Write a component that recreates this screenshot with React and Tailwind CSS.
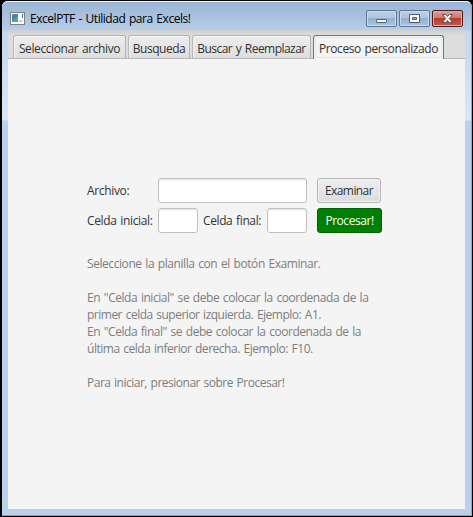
const FONT = "font-['Open_Sans','Noto_Sans',sans-serif]";

function Tab({ label, width, tracking, active }) {
  return (
    <div
      className={`flex shrink-0 justify-center rounded-t-[3px] border border-b-0 pt-[5px] ${width} ${
        active
          ? "h-6 border-[#0f9ac8] bg-[#f4f4f4] shadow-[inset_0_0_0_1px_#f4f4f4,inset_0_0_0_2px_#d8edf5]"
          : "h-[23px] border-[#b5b5b5] bg-linear-to-b from-[#ededed] to-[#dedede] shadow-[inset_0_1px_0_#fafafa,inset_1px_0_0_#f3f3f3]"
      }`}
    >
      <span className={`leading-4 whitespace-nowrap ${tracking}`}>{label}</span>
    </div>
  );
}

function Field({ width }) {
  return (
    <input
      aria-label="campo"
      className={`h-[25px] shrink-0 rounded-[3px] border border-[#c0c0c0] bg-white shadow-[inset_0_2px_2px_-1px_#dedede] outline-none ${width}`}
    />
  );
}

function Caption({ close, children }) {
  return (
    <div
      className={`flex h-[17px] w-[31px] items-center justify-center rounded-[2px] border ${
        close
          ? "border-[#4d1a22] bg-[linear-gradient(#dfa195_0%,#cf7768_46%,#b93a27_50%,#c95b47_100%)] shadow-[inset_0_0_0_1px_#e5aaa0]"
          : "border-[#5d7493] bg-[linear-gradient(#bdd0e6_0%,#aec5df_46%,#94afcf_50%,#aac6e2_100%)] shadow-[inset_0_0_0_1px_#c8daee]"
      }`}
    >
      <svg width="13" height="11" viewBox="0 0 13 11">
        {children}
      </svg>
    </div>
  );
}

export default function App() {
  return (
    <div className={`h-[517px] w-[473px] overflow-hidden bg-black text-xs text-[#333] [word-spacing:1px] ${FONT}`}>
      <div className="h-[517px] rounded-t-[7px] border-t border-r border-b border-l-2 border-black bg-[#b9d1ea]">
        <div className="flex h-full flex-col rounded-t-[6px] border-t border-r border-b border-t-[#eef5fb] border-r-[#36cfe8] border-b-[#22cbe4] bg-[linear-gradient(#9ab4d4_0px,#b7cee8_28px,#c4d7ed_30px,#dae6f4_118px,#b9d1ea_119px)] pr-1.5 pb-1.5 pl-1.5">
          <header className="flex h-7 shrink-0 items-center text-black">
            <svg className="mt-[4px] ml-[1.5px] shrink-0" width="15" height="13" viewBox="0 0 15 13">
              <rect x=".5" y=".5" width="14" height="12" fill="#fff" stroke="#808080" />
              <rect x="2" y="2" width="6" height="8" fill="#4d9b92" />
              <path d="M2 2h6v3L2 8z" fill="#4b83a9" />
              <path d="M8 3v7H3z" fill="#4fae7f" />
              <rect x="9" y="8" width="3" height="2" fill="#ccc" />
              <rect x="12" y="2" width="1" height="4" fill="#287ba5" />
              <rect x="12" y="8" width="1" height="2" fill="#ddd" />
            </svg>
            <h1 className="mt-[6px] ml-[5.5px] leading-4 tracking-[-0.46px] whitespace-nowrap">
              ExcelPTF - Utilidad para Excels!
            </h1>
            <div className="mt-[5px] mr-[2px] ml-auto flex gap-[2px]">
              <Caption>
                <rect x="1.5" y="6.5" width="10" height="3" rx=".5" fill="#fff" stroke="#53606f" />
              </Caption>
              <Caption>
                <path
                  d="M1.5 1.5h10v8h-10zM4.5 4.5h4v2h-4z"
                  fill="#fff"
                  fillRule="evenodd"
                  stroke="#535b70"
                />
              </Caption>
              <Caption close>
                <path
                  d="M1.5 1.5h3.2l1.8 2 1.8-2h3.2L8.3 5.5l3.2 4H8.3l-1.8-2-1.8 2H1.5l3.2-4z"
                  fill="#fff"
                  stroke="#535666"
                />
              </Caption>
            </div>
          </header>
          <main className="flex grow flex-col bg-[#f4f4f4]">
            <nav className="flex h-[29px] shrink-0 items-end gap-[2px] bg-linear-to-b from-[#cfcfcf] to-[#dddddd] to-20% pl-[5px] shadow-[inset_0_-1px_0_#b8b8b8]">
              <div className="mb-px flex h-[23px] items-start gap-[2px]">
                <Tab label="Seleccionar archivo" width="w-[113px]" tracking="tracking-[-0.4px]" />
                <Tab label="Busqueda" width="w-[62px]" tracking="tracking-[-0.5px]" />
                <Tab label="Buscar y Reemplazar" width="w-[119px]" tracking="tracking-[-0.54px]" />
              </div>
              <Tab active label="Proceso personalizado" width="w-[131px]" tracking="tracking-[-0.42px]" />
            </nav>
            <section className="flex flex-col gap-[5px] pt-[119px] pl-[79px]">
              <div className="flex items-center">
                <label className="w-[71px] tracking-[-0.35px]">Archivo:</label>
                <Field width="w-[149px]" />
                <button className="ml-2.5 h-[25px] w-16 rounded-[3px] border border-[#b5b5b5] bg-linear-to-b from-[#eeeeee] to-[#dcdcdc] tracking-[-0.58px] shadow-[inset_0_0_0_1px_#f3f3f3]">
                  Examinar
                </button>
              </div>
              <div className="flex items-center">
                <label className="w-[71px] tracking-[-0.36px] whitespace-nowrap">Celda inicial:</label>
                <Field width="w-10" />
                <label className="ml-[5px] w-16 tracking-[-0.39px] whitespace-nowrap">Celda final:</label>
                <Field width="w-10" />
                <button className="ml-2.5 h-[25px] w-[65px] rounded-[3px] border border-[#006400] bg-[#008000] tracking-[-0.45px] text-white">
                  Procesar!
                </button>
              </div>
            </section>
            <section className="pt-[22px] pl-[79px] leading-[17px] whitespace-nowrap text-[#7d7d7d]">
              <p className="tracking-[-0.43px]">Seleccione la planilla con el botón Examinar.</p>
              <p className="mt-[17px] tracking-[-0.45px]">En "Celda inicial" se debe colocar la coordenada de la</p>
              <p className="tracking-[-0.5px]">primer celda superior izquierda. Ejemplo: A1.</p>
              <p className="tracking-[-0.46px]">En "Celda final" se debe colocar la coordenada de la</p>
              <p className="tracking-[-0.48px]">última celda inferior derecha. Ejemplo: F10.</p>
              <p className="mt-[17px] tracking-[-0.5px]">Para iniciar, presionar sobre Procesar!</p>
            </section>
          </main>
        </div>
      </div>
    </div>
  );
}
